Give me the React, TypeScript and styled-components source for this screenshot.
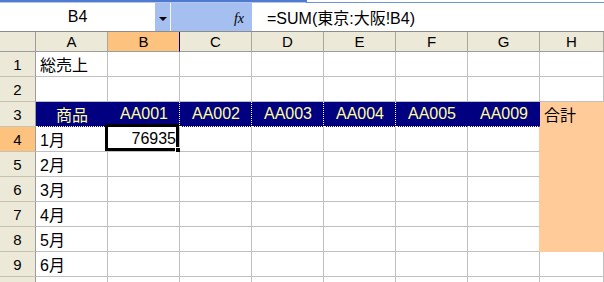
import styled, { createGlobalStyle, css } from 'styled-components';

const GlobalStyle = createGlobalStyle`
  html, body {
    margin: 0;
    padding: 0;
    background: #ffffff;
  }
  body {
    width: 604px;
    height: 282px;
    overflow: hidden;
    font-family: "Liberation Sans", "Noto Sans CJK JP", sans-serif;
  }
`;

const COLS = ['A', 'B', 'C', 'D', 'E', 'F', 'G', 'H'];
const CODES = ['AA001', 'AA002', 'AA003', 'AA004', 'AA005', 'AA009'];
const MONTHS = ['1月', '2月', '3月', '4月', '5月', '6月'];

const NAVY = '#000080';
const ORANGE = '#ffcc99';
const GRID = '#c0c0c0';
const DOT = '#ffffcc';

type Tone = 'plain' | 'title' | 'total';

type CellInfo = {
  text?: string;
  tone: Tone;
  align: 'left' | 'center' | 'right';
  right: string;
  bottom: string;
  selected?: boolean;
};

// works out fill + border of one cell like excel does
const cellInfo = (row: number, col: number): CellInfo => {
  const info: CellInfo = { tone: 'plain', align: 'left', right: `1px solid ${GRID}`, bottom: `1px solid ${GRID}` };
  if (row === 1 && col === 0) info.text = '総売上';
  if (row >= 4 && row <= 9 && col === 0) info.text = MONTHS[row - 4];
  if (row === 3 && col < 7) {
    info.tone = 'title';
    info.align = 'center';
    info.text = col === 0 ? '商品' : CODES[col - 1];
    info.right = col >= 1 && col <= 4 ? `1px dotted ${DOT}` : `1px solid ${NAVY}`;
    info.bottom = `1px dotted ${DOT}`;
  }
  if (col === 7 && row >= 3 && row <= 8) {
    info.tone = 'total';
    info.right = `1px solid ${ORANGE}`;
    info.bottom = `1px solid ${ORANGE}`;
    if (row === 3) info.text = '合計';
  }
  if (col === 6 && row >= 4 && row <= 8) info.right = `1px solid ${ORANGE}`;
  if (row === 4 && col === 1) {
    info.text = '76935';
    info.align = 'right';
    info.selected = true;
  }
  return info;
};

const App = () => {
  const rows = Array.from({ length: 10 }, (_, i) => i + 1);
  return (
    <>
      <GlobalStyle />
      <TopStrip>
        <StripLeft />
        <StripRight />
      </TopStrip>
      <FormulaBar>
        <NameBox>B4</NameBox>
        <NameDrop>
          <Caret />
        </NameDrop>
        <Divider />
        <FxBox>
          <Fx>fx</Fx>
        </FxBox>
        <FormulaText>=SUM(東京:大阪!B4)</FormulaText>
      </FormulaBar>
      <Sheet>
        <Corner />
        {COLS.map((c) => (
          <ColHead key={c} $active={c === 'B'}>
            {c}
          </ColHead>
        ))}
        {rows.map((r) => (
          <Row key={r} r={r} />
        ))}
      </Sheet>
    </>
  );
};

const Row = ({ r }: { r: number }) => (
  <>
    <RowHead $active={r === 4}>{r}</RowHead>
    {COLS.map((_, ci) => {
      const info = cellInfo(r, ci);
      return (
        <Cell key={ci} $tone={info.tone} $align={info.align} $right={info.right} $bottom={info.bottom}>
          {info.text}
          {info.selected && (
            <Selection>
              <FillHandle />
            </Selection>
          )}
        </Cell>
      );
    })}
  </>
);

export default App;

const TopStrip = styled.div`
  display: flex;
  height: 3px;
`;

const StripLeft = styled.div`
  width: 306px;
  background: linear-gradient(#4f7ad0 0 2px, #b3c7ef 2px 3px);
`;

const StripRight = styled.div`
  flex: 1;
  background: #ffffff;
  border-left: 1px solid #4f7ad0;
  border-bottom: 1px solid #6f93d8;
  box-sizing: border-box;
`;

const FormulaBar = styled.div`
  display: flex;
  height: 28px;
  border-bottom: 1px solid #8c8c8c;
  font-size: 16px;
  color: #000;
`;

const NameBox = styled.div`
  width: 155px;
  background: #ffffff;
  display: flex;
  align-items: center;
  justify-content: center;
`;

const NameDrop = styled.div`
  width: 15px;
  background: #a6bff1;
  display: flex;
  align-items: center;
  justify-content: center;
`;

const Caret = styled.div`
  width: 0;
  height: 0;
  margin-top: 3px;
  border-left: 4px solid transparent;
  border-right: 4px solid transparent;
  border-top: 4px solid #000;
`;

const Divider = styled.div`
  width: 1px;
  background: #f4f7fd;
`;

const FxBox = styled.div`
  width: 81px;
  background: #a6bff1;
  display: flex;
  align-items: center;
  justify-content: flex-end;
  padding-right: 8px;
  box-sizing: border-box;
`;

const Fx = styled.span`
  font-family: "Liberation Serif", serif;
  font-style: italic;
  font-size: 14px;
  margin-top: 4px;
`;

const FormulaText = styled.div`
  flex: 1;
  display: flex;
  align-items: center;
  padding-left: 15px;
  white-space: nowrap;
`;

const Sheet = styled.div`
  display: grid;
  grid-template-columns: 36px repeat(7, 72px) 1fr;
  grid-template-rows: 20px repeat(10, 25px);
  font-size: 16px;
`;

const headBase = css`
  box-sizing: border-box;
  display: flex;
  align-items: center;
  justify-content: center;
  font-size: 15px;
  color: #000;
`;

const Corner = styled.div`
  ${headBase};
  background: #ece9d8;
  border-right: 1px solid #9d9d9d;
  border-bottom: 1px solid #9d9d9d;
`;

const ColHead = styled.div<{ $active?: boolean }>`
  ${headBase};
  background: ${(p) => (p.$active ? '#fdc27d' : '#ece9d8')};
  border-right: 1px solid ${(p) => (p.$active ? NAVY : '#aca899')};
  border-bottom: 1px solid #9d9d9d;
`;

const RowHead = styled.div<{ $active?: boolean }>`
  ${headBase};
  background: ${(p) => (p.$active ? '#fdc27d' : '#ece9d8')};
  border-right: 1px solid #9d9d9d;
  border-bottom: 1px solid #c6c3b3;
`;

const toneBg: Record<Tone, string> = {
  plain: '#ffffff',
  title: NAVY,
  total: ORANGE,
};

const Cell = styled.div<{ $tone: Tone; $align: string; $right: string; $bottom: string }>`
  position: relative;
  box-sizing: border-box;
  display: flex;
  align-items: center;
  justify-content: ${(p) => (p.$align === 'right' ? 'flex-end' : p.$align === 'center' ? 'center' : 'flex-start')};
  padding: 0 3px 0 4px;
  background: ${(p) => toneBg[p.$tone]};
  color: ${(p) => (p.$tone === 'title' ? '#ffff99' : '#000')};
  border-right: ${(p) => p.$right};
  border-bottom: ${(p) => p.$bottom};
  white-space: nowrap;
`;

const Selection = styled.div`
  position: absolute;
  top: -3px;
  left: -3px;
  right: 0;
  bottom: 0;
  border: 3px solid #000;
  pointer-events: none;
`;

const FillHandle = styled.div`
  position: absolute;
  right: -5px;
  bottom: -5px;
  width: 4px;
  height: 4px;
  background: #000;
  border: 1px solid #fff;
`;
